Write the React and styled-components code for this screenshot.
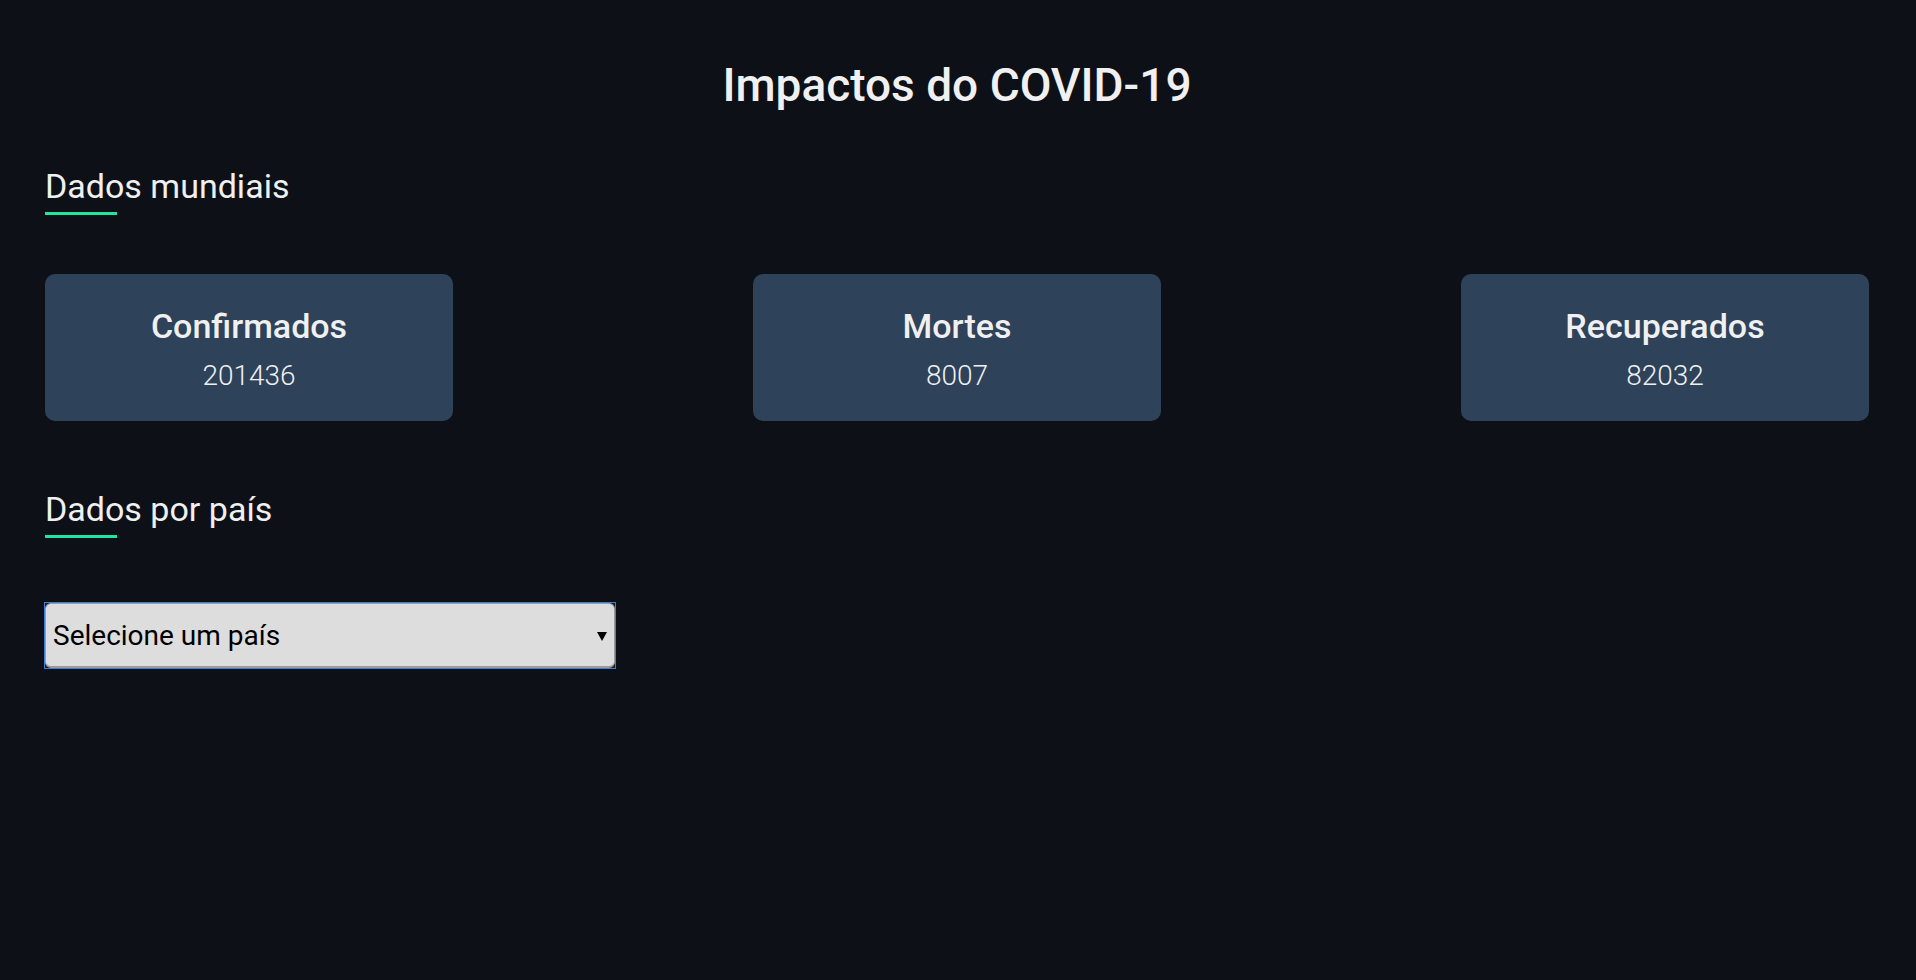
import React from "react";
import styled, { createGlobalStyle } from "styled-components";

const GlobalStyle = createGlobalStyle`
  body {
    margin: 0;
    background-color: #0d1117;
    font-family: Roboto, "Liberation Sans", sans-serif;
    color: #f0f0f0;
  }
`;

const stats = [
  { label: "Confirmados", value: 201436 },
  { label: "Mortes", value: 8007 },
  { label: "Recuperados", value: 82032 },
];

const App = () => {
  return (
    <>
      <GlobalStyle />
      <Page>
        <Title>Impactos do COVID-19</Title>

        {/* Dados mundiais */}
        <SectionTitle>Dados mundiais</SectionTitle>
        <CardRow>
          {stats.map((item) => (
            <Card key={item.label}>
              <CardLabel>{item.label}</CardLabel>
              <CardValue>{item.value}</CardValue>
            </Card>
          ))}
        </CardRow>

        {/* Dados por país */}
        <SectionTitle top={68}>Dados por país</SectionTitle>
        <SelectFrame>
          <CountrySelect defaultValue="">
            <option value="">Selecione um país</option>
          </CountrySelect>
          <Arrow />
        </SelectFrame>
      </Page>
    </>
  );
};

export default App;

// --- Styled Components ---

const Page = styled.div`
  padding: 0 47px 0 45px;
  display: flex;
  flex-direction: column;
  align-items: flex-start;
`;

const Title = styled.h1`
  align-self: stretch;
  margin: 57px 0 0;
  font-size: 46px;
  line-height: 56px;
  font-weight: 500;
  text-align: center;
`;

const SectionTitle = styled.h2`
  margin: ${(props) => props.top || 53}px 0 0;
  font-size: 34px;
  line-height: 40px;
  font-weight: 400;
  display: flex;
  flex-direction: column;

  &::after {
    content: "";
    width: 72px;
    height: 3px;
    margin-top: 6px;
    background-color: #1ee8a0;
  }
`;

const CardRow = styled.div`
  align-self: stretch;
  margin-top: 59px;
  display: flex;
  justify-content: space-between;
`;

const Card = styled.div`
  width: 408px;
  height: 147px;
  box-sizing: border-box;
  padding-top: 32px;
  background-color: #2e425a;
  border-radius: 10px;
  display: flex;
  flex-direction: column;
  align-items: center;
`;

const CardLabel = styled.span`
  font-size: 34px;
  line-height: 40px;
  font-weight: 500;
`;

const CardValue = styled.span`
  margin-top: 13px;
  font-size: 28px;
  line-height: 34px;
  font-weight: 300;
`;

const SelectFrame = styled.div`
  position: relative;
  margin-top: 64px;
  width: 572px;
  height: 67px;
  margin-left: -1px;
  box-sizing: border-box;
  border: 1px solid #3c7edb;
  background-color: #1c1c1c;
  display: flex;
`;

const CountrySelect = styled.select`
  flex: 1;
  appearance: none;
  margin: 0;
  padding: 0 0 0 7px;
  border: 1px solid #9c9c9c;
  border-bottom-width: 2px;
  border-radius: 6px;
  background-color: #dddddd;
  color: #000;
  font-family: Roboto, "Liberation Sans", sans-serif;
  font-size: 28px;
  outline: none;
`;

const Arrow = styled.span`
  position: absolute;
  right: 8px;
  top: 29px;
  width: 0;
  height: 0;
  border-left: 5px solid transparent;
  border-right: 5px solid transparent;
  border-top: 9px solid #000;
  pointer-events: none;
`;
